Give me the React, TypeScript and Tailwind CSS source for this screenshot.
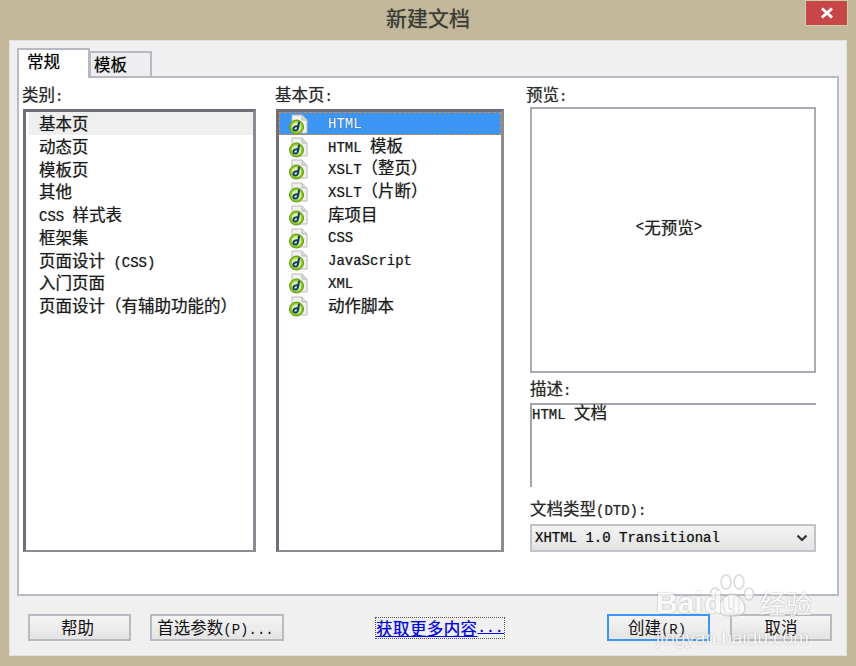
const cjk = "font-['Noto_Sans_CJK_SC','Liberation_Sans',sans-serif] text-[16.5px]";
const lat = "font-['Liberation_Mono','Noto_Sans_CJK_SC',monospace] text-[14px]";

// latin runs are narrower than the hanzi next to them, so each run gets its own size
function Mixed({ text }: { text: string }) {
  const runs = text.match(/[\x20-\x7e]+|[^\x20-\x7e]+/g) ?? [];
  return (
    <>
      {runs.map((run, i) => (
        <span key={i} className={/^[\x20-\x7e]/.test(run) ? lat : cjk}>
          {run}
        </span>
      ))}
    </>
  );
}

function FileIcon() {
  return (
    <svg width="22" height="23" viewBox="0 0 22 23" className="shrink-0">
      <path d="M5 3h10l5 5v13H5z" fill="#f1f1ee" stroke="#b9b9b4" />
      <path d="M15 3v5h5" fill="#dcdcd8" stroke="#b9b9b4" />
      <circle cx="9.500" cy="15" r="7" fill="#8cc81e" stroke="#5f9a12" />
      <circle cx="9.500" cy="15" r="4.800" fill="#dff0b0" />
      <path
        d="M12 10.500C11.500 13.500 11.300 16 10.500 17.500 9.500 19 6.500 19 6.300 17 6.300 14.800 8.900 13.600 11.500 14.400"
        fill="none"
        stroke="#123f66"
        strokeWidth="2"
        strokeLinecap="round"
      />
    </svg>
  );
}

function ListBox({ children, className = "" }: { children: React.ReactNode; className?: string }) {
  return (
    <div
      className={`h-[443px] border-t-[3px] border-l-[3px] border-r-[3px] border-b-2 border-t-[#6f6f7c] border-l-[#6f6f7c] border-r-[#8b8b96] border-b-[#8b8b96] bg-white ${className}`}
    >
      {children}
    </div>
  );
}

const categories = [
  "基本页",
  "动态页",
  "模板页",
  "其他",
  "CSS 样式表",
  "框架集",
  "页面设计 (CSS)",
  "入门页面",
  "页面设计（有辅助功能的）",
];

const pages = ["HTML", "HTML 模板", "XSLT（整页）", "XSLT（片断）", "库项目", "CSS", "JavaScript", "XML", "动作脚本"];

function Label({ text, className = "" }: { text: string; className?: string }) {
  return (
    <div className={`h-[24px] leading-[24px] whitespace-pre text-[#2b2b2b] ${className}`}>
      <Mixed text={text} />
    </div>
  );
}

function Btn({ text, className = "" }: { text: string; className?: string }) {
  return (
    <button
      className={`h-[27px] border-2 bg-gradient-to-b from-[#f4f4f4] to-[#e4e4e4] leading-none whitespace-pre text-[#111] ${className}`}
    >
      <Mixed text={text} />
    </button>
  );
}

export default function App() {
  return (
    <div className="relative flex h-[666px] w-[856px] flex-col overflow-hidden bg-[#c3b89c] [text-shadow:0_0_1px_rgba(0,0,0,0.5)]">
      <div className="grid h-[40px] shrink-0 grid-cols-[1fr_auto_1fr]">
        <div />
        <div className="pt-[2px] text-[21px] leading-[30px] text-[#3a3a34] font-['Noto_Sans_CJK_SC',sans-serif]">
          新建文档
        </div>
        <div className="flex justify-end pr-[8px]">
          <div className="flex h-[26px] w-[43px] items-center justify-center border border-[#c9d2a6] bg-[#c8454a]">
            <svg width="14" height="12" viewBox="0 0 14 12">
              <path d="M2 1.500l10 9M12 1.500l-10 9" stroke="#fff" strokeWidth="3" />
            </svg>
          </div>
        </div>
      </div>

      <div className="mb-[10px] ml-[9px] mr-[9px] flex flex-1 flex-col border border-[#e4e2da] bg-[#f0f0f0] px-[7px] pt-[7px]">
        <div className="relative z-10 flex h-[28px] items-end">
          <div className="mb-[-2px] flex h-[30px] w-[73px] items-start border-2 border-b-0 border-[#b9b9c4] bg-white pl-[8px] leading-[22px]">
            <Mixed text="常规" />
          </div>
          <div className="ml-[-1px] flex h-[25px] w-[63px] items-start border-2 border-b-0 border-[#b9b9c4] bg-[#eeeef0] pl-[3px] leading-[22px]">
            <Mixed text="模板" />
          </div>
        </div>

        <div className="grid h-[520px] grid-cols-[253px_251px_1fr] border-2 border-[#b9b9c4] bg-white pl-[3px] pt-[4px]">
          <div>
            <Label text="类别:" className="mb-[3px]" />
            <ListBox className="ml-[1px] mr-[19px] pl-[3px]">
              {categories.map((c, i) => (
                <div
                  key={c}
                  className={`h-[22.75px] pl-[10px] leading-[22px] whitespace-pre text-[#1c1c1c] ${i === 0 ? "bg-[#efefef]" : ""}`}
                >
                  <Mixed text={c} />
                </div>
              ))}
            </ListBox>
          </div>

          <div>
            <Label text="基本页:" className="mb-[3px]" />
            <ListBox className="ml-[1px] mr-[22px]">
              {pages.map((p, i) => (
                <div
                  key={p}
                  className={`flex h-[22.75px] items-center whitespace-pre ${
                    i === 0
                      ? "border border-dashed border-[#d98b3a] bg-[#3d95f5] pl-[7px] text-white"
                      : "pl-[8px] text-[#1c1c1c]"
                  }`}
                >
                  <FileIcon />
                  <span className="ml-[19px] leading-[22px]">
                    <Mixed text={p} />
                  </span>
                </div>
              ))}
            </ListBox>
          </div>

          <div className="pr-[21px]">
            <Label text="预览:" className="mb-[1px]" />
            <div className="ml-[4px] flex h-[266px] items-center justify-center border-2 border-[#a9a9b2] bg-white pb-[26px] pr-[8px] text-[#222]">
              <Mixed text="<无预览>" />
            </div>
            <Label text="描述:" className="mb-[3px] ml-[4px] mt-[3px]" />
            <div className="ml-[4px] h-[84px] border-l-2 border-t-2 border-[#a3a3ac] leading-[14px] whitespace-pre text-[#222]">
              <Mixed text="HTML 文档" />
            </div>
            <Label text="文档类型(DTD):" className="mb-[4px] ml-[4px] mt-[9px]" />
            <div className="ml-[4px] flex h-[28px] items-center justify-between border-2 border-[#c2c2c8] bg-gradient-to-b from-[#f3f3f3] to-[#e4e4e4] pl-[3px] pr-[6px] whitespace-pre text-[#111]">
              <Mixed text="XHTML 1.0 Transitional" />
              <svg width="12" height="8" viewBox="0 0 12 8">
                <path d="M1.500 1.500L6 6l4.500-4.500" fill="none" stroke="#333" strokeWidth="2.200" />
              </svg>
            </div>
          </div>
        </div>

        <div className="flex items-start pl-[11px] pt-[18px]">
          <Btn text="帮助" className="w-[103px] border-[#b9b9c0] pr-[4px]" />
          <Btn text="首选参数(P)..." className="ml-[19px] w-[134px] border-[#b9b9c0] pr-[3px]" />
          <a className="ml-[91px] mt-[3px] flex h-[22px] w-[130px] items-center justify-center whitespace-pre border border-dotted border-[#555] tracking-[0.4px] text-[#0000ee] underline">
            <Mixed text="获取更多内容..." />
          </a>
          <Btn text="创建(R)" className="ml-[102px] w-[103px] border-[#3d95f5] pr-[3px]" />
          <Btn text="取消" className="ml-[20px] w-[102px] border-[#b9b9c0]" />
        </div>
      </div>

      {/* baidu watermark over the buttons */}
      <div className="pointer-events-none absolute left-[656px] top-[574px] w-[156px] text-white opacity-70 [text-shadow:0_0_2px_#8a8a8a]">
        <svg width="46" height="44" viewBox="0 0 46 44" className="absolute left-[53px] top-0" fill="none" stroke="#c9c9c9" strokeWidth="1.500">
          <ellipse cx="6" cy="20" rx="4.500" ry="6" fill="#fff" />
          <ellipse cx="17" cy="8" rx="5" ry="7" fill="#fff" />
          <ellipse cx="30" cy="8" rx="5" ry="7" fill="#fff" />
          <ellipse cx="40" cy="20" rx="4.500" ry="6" fill="#fff" />
          <path d="M23 20c-7 0-13 8-13 15 0 6 7 7 13 7s13-1 13-7c0-7-6-15-13-15z" fill="#fff" />
        </svg>
        <div className="relative flex h-[46px] items-end justify-between pb-[2px] font-['Liberation_Sans',sans-serif] text-[30px] leading-[30px] font-bold">
          <span>Bai</span>
          <span className="ml-[-16px] mr-[2px]">du</span>
          <span className="font-['Noto_Sans_CJK_SC',sans-serif] text-[26px] font-normal">经验</span>
        </div>
        <div className="mt-[9px] font-['Liberation_Sans',sans-serif] text-[19px] leading-[18px] whitespace-nowrap">
          jingyan.baidu.com
        </div>
      </div>
    </div>
  );
}
